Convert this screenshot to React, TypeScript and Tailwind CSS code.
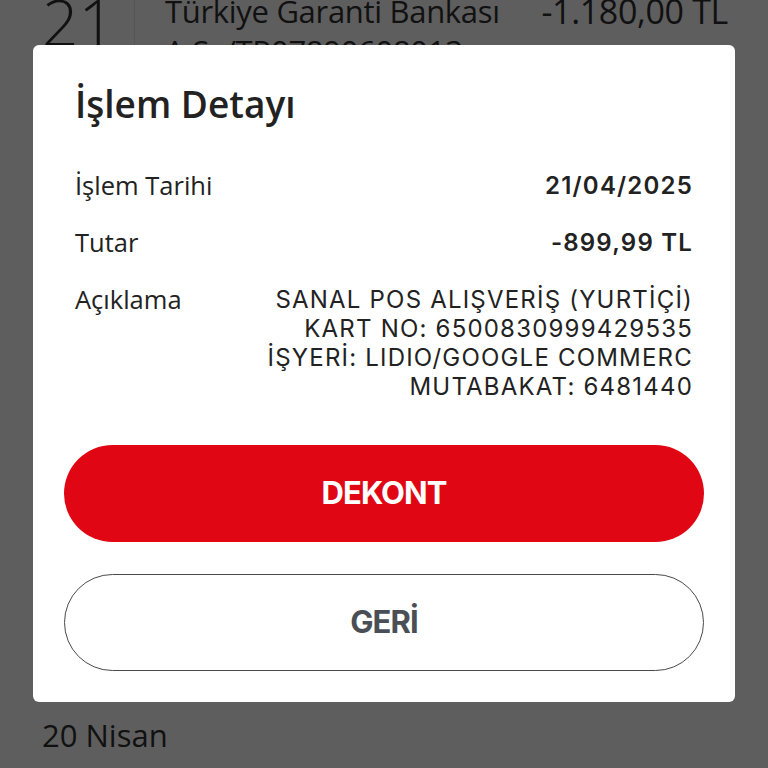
import React from 'react';

const labelFont = { fontFamily: '"Open Sans", "Noto Sans", sans-serif' };
const valueFont = { fontFamily: 'Inter, "Noto Sans", sans-serif' };

function DetailRow({ label, children }: { label: string; children: React.ReactNode }) {
  return (
    <div className="flex items-start justify-between gap-6">
      <div className="shrink-0 text-[25.5px] leading-[29px] text-[#222]" style={labelFont}>
        {label}
      </div>
      <div className="text-right text-[24px] leading-[29px] tracking-[0.05em] text-[#222]" style={valueFont}>
        {children}
      </div>
    </div>
  );
}

export default function App() {
  return (
    <div className="relative h-[768px] w-[768px] overflow-hidden bg-[#5e5e5e]">
      {/* page behind the dimmed overlay */}
      <div className="flex h-[68px] items-start">
        <div
          className="-mt-[12px] w-[135px] border-r border-[#555] pl-[42px] text-[64px] font-light leading-[68px] text-[#111]"
          style={labelFont}
        >
          21
        </div>
        <div className="flex flex-1 justify-between pl-[30px] pr-[40px]" style={labelFont}>
          <div className="-mt-[9px] text-[31px] leading-[40px] font-medium tracking-[-0.01em] text-[#111]">
            Türkiye Garanti Bankası
            <br />
            A.Ş. /TR07890608013
          </div>
          <div className="-mt-[9px] text-[34px] leading-[40px] tracking-[-0.01em] text-[#111]">-1.180,00 TL</div>
        </div>
      </div>
      <div className="mt-[640px] pl-[42px] text-[31px] leading-[54px] text-[#111]" style={labelFont}>
        20 Nisan
      </div>

      {/* modal */}
      <div className="absolute left-[33px] top-[45px] flex h-[657px] w-[702px] flex-col rounded-[6px] bg-white px-[31px] pt-[34px]">
        <div className="px-[11px]">
          <h2 className="text-[37px] font-semibold leading-[50px] text-[#222]" style={labelFont}>
            İşlem Detayı
          </h2>
          <div className="mt-[42px] flex flex-col gap-[28px]">
            <DetailRow label="İşlem Tarihi">
              <span className="font-semibold">21/04/2025</span>
            </DetailRow>
            <DetailRow label="Tutar">
              <span className="font-semibold">-899,99 TL</span>
            </DetailRow>
            <DetailRow label="Açıklama">
              <div>SANAL POS ALIŞVERİŞ (YURTİÇİ)</div>
              <div>KART NO: 6500830999429535</div>
              <div>İŞYERİ: LIDIO/GOOGLE COMMERC</div>
              <div>MUTABAKAT: 6481440</div>
            </DetailRow>
          </div>
        </div>
        <div className="mt-[44px] flex flex-col gap-[32px]" style={valueFont}>
          <button className="flex h-[97px] w-full items-center justify-center rounded-full bg-[#e10613] text-[31px] font-bold tracking-[-0.03em] text-white">
            DEKONT
          </button>
          <button className="flex h-[97px] w-full items-center justify-center rounded-full border-[1.5px] border-[#4a4a4a] bg-white text-[31px] font-bold tracking-[-0.03em] text-[#4a4f55]">
            GERİ
          </button>
        </div>
      </div>
    </div>
  );
}
